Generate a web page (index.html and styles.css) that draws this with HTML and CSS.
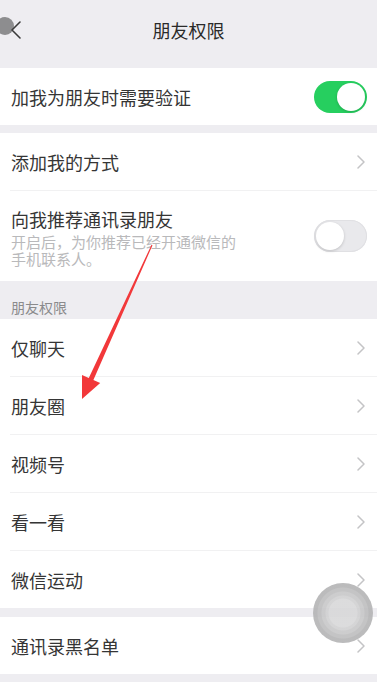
FILE: index.html
```html
<!DOCTYPE html>
<html lang="zh-CN">
<head>
<meta charset="utf-8">
<title>朋友权限</title>
<link rel="stylesheet" href="styles.css">
</head>
<body>
<div class="page">
  <header class="nav">
    <div class="nav-left">
      <span class="touch-dot"></span>
      <svg class="back" width="12" height="20" viewBox="0 0 12 20"><path d="M10 2 L2 10 L10 18" fill="none" stroke="#3a3a3a" stroke-width="1.6" stroke-linecap="round" stroke-linejoin="round"/></svg>
    </div>
    <h1 class="title">朋友权限</h1>
    <div class="nav-right"></div>
  </header>

  <section class="group">
    <div class="row">
      <span class="label">加我为朋友时需要验证</span>
      <span class="switch on"><span class="knob"></span></span>
    </div>
  </section>

  <section class="group gap">
    <div class="row">
      <span class="label">添加我的方式</span>
      <svg class="chev" width="8" height="14" viewBox="0 0 8 14"><path d="M1 1 L7 7 L1 13" fill="none" stroke="#c4c4c6" stroke-width="1.5" stroke-linecap="round" stroke-linejoin="round"/></svg>
    </div>
    <div class="row tall">
      <div class="texts">
        <span class="label">向我推荐通讯录朋友</span>
        <span class="desc">开启后，为你推荐已经开通微信的手机联系人。</span>
      </div>
      <span class="switch off"><span class="knob"></span></span>
    </div>
  </section>

  <div class="section-title">朋友权限</div>

  <section class="group">
    <div class="row"><span class="label">仅聊天</span><svg class="chev" width="8" height="14" viewBox="0 0 8 14"><path d="M1 1 L7 7 L1 13" fill="none" stroke="#c4c4c6" stroke-width="1.5" stroke-linecap="round" stroke-linejoin="round"/></svg></div>
    <div class="row"><span class="label">朋友圈</span><svg class="chev" width="8" height="14" viewBox="0 0 8 14"><path d="M1 1 L7 7 L1 13" fill="none" stroke="#c4c4c6" stroke-width="1.5" stroke-linecap="round" stroke-linejoin="round"/></svg></div>
    <div class="row"><span class="label">视频号</span><svg class="chev" width="8" height="14" viewBox="0 0 8 14"><path d="M1 1 L7 7 L1 13" fill="none" stroke="#c4c4c6" stroke-width="1.5" stroke-linecap="round" stroke-linejoin="round"/></svg></div>
    <div class="row"><span class="label">看一看</span><svg class="chev" width="8" height="14" viewBox="0 0 8 14"><path d="M1 1 L7 7 L1 13" fill="none" stroke="#c4c4c6" stroke-width="1.5" stroke-linecap="round" stroke-linejoin="round"/></svg></div>
    <div class="row"><span class="label">微信运动</span><svg class="chev" width="8" height="14" viewBox="0 0 8 14"><path d="M1 1 L7 7 L1 13" fill="none" stroke="#c4c4c6" stroke-width="1.5" stroke-linecap="round" stroke-linejoin="round"/></svg></div>
  </section>

  <section class="group gap9">
    <div class="row"><span class="label">通讯录黑名单</span><svg class="chev" width="8" height="14" viewBox="0 0 8 14"><path d="M1 1 L7 7 L1 13" fill="none" stroke="#c4c4c6" stroke-width="1.5" stroke-linecap="round" stroke-linejoin="round"/></svg></div>
  </section>

  <svg class="arrow" width="377" height="682" viewBox="0 0 377 682">
    <polygon points="152.5,245.2 151.5,244.8 88.8,377.9 82,375 82,399 100.2,383.1 93.4,380" fill="#f2383a"/>
  </svg>

  <div class="float-btn"></div>
</div>
</body>
</html>
```

FILE: styles.css
```css
* { box-sizing: border-box; margin: 0; padding: 0; }
html, body {
  width: 377px;
  height: 682px;
  overflow: hidden;
  background: #eeedf1;
}
body {
  font-family: "Noto Sans CJK SC", "Noto Sans", sans-serif;
  color: #353535;
}
.page {
  position: relative;
  width: 377px;
  height: 682px;
  display: flex;
  flex-direction: column;
}
.nav {
  height: 68px;
  display: grid;
  grid-template-columns: 60px 1fr 60px;
  align-items: start;
  padding-top: 17px;
}
.nav-left {
  position: relative;
  height: 26px;
  display: flex;
  align-items: center;
  padding-left: 10px;
}
.touch-dot {
  position: absolute;
  left: -4px;
  top: 0;
  width: 18px;
  height: 18px;
  border-radius: 50%;
  background: #8d8d8f;
}
.back { position: relative; }
.title {
  font-size: 18px;
  font-weight: 400;
  line-height: 26px;
  text-align: center;
  color: #2a2a2a;
}
.group {
  background: #fff;
  display: flex;
  flex-direction: column;
}
.gap { margin-top: 8px; }
.gap9 { margin-top: 9px; }
.row {
  height: 57px;
  display: flex;
  align-items: center;
  justify-content: space-between;
  padding: 0 12px 0 11px;
  position: relative;
}
.row + .row { margin-top: 1px; }
.row + .row::before {
  content: "";
  position: absolute;
  left: 10px;
  right: 0;
  top: -1px;
  height: 1px;
  background: #f1f1f2;
}
.row.tall {
  height: 90px;
  align-items: flex-start;
  padding-top: 16px;
}
.label {
  font-size: 18px;
  line-height: 24px;
}
.texts {
  display: flex;
  flex-direction: column;
}
.desc {
  margin-top: 2px;
  font-size: 15px;
  line-height: 17px;
  color: #b9b9bb;
  max-width: 226px;
}
.switch {
  width: 53px;
  height: 32px;
  border-radius: 16px;
  display: flex;
  align-items: center;
  padding: 2px;
  margin-right: -2px;
}
.switch.on {
  background: #26cf5f;
  justify-content: flex-end;
}
.switch.off {
  background: #e9e9ec;
  justify-content: flex-start;
  box-shadow: inset 0 0 0 1px #e0e0e3;
  margin-top: 13px;
}
.knob {
  width: 28px;
  height: 28px;
  border-radius: 50%;
  background: #fff;
  box-shadow: 0 1px 3px rgba(0,0,0,0.18);
}
.chev { flex: none; }
.section-title {
  height: 38px;
  padding: 16px 0 0 11px;
  font-size: 14px;
  line-height: 20px;
  color: #8a8a8c;
}
.arrow {
  position: absolute;
  left: 0;
  top: 0;
  pointer-events: none;
}
.float-btn {
  position: absolute;
  left: 313px;
  top: 583px;
  width: 60px;
  height: 60px;
  border-radius: 50%;
  opacity: 0.88;
  background: radial-gradient(circle, #d7d7d8 0 14px, #cfcfd0 15px 17px, #c6c6c7 18px 21px, #bcbcbd 22px 25px, #b2b2b3 26px 30px);
}
```
